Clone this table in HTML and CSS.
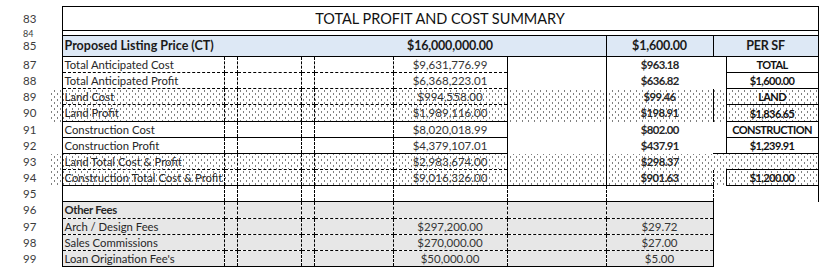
FILE: index.html
```html
<!DOCTYPE html>
<html>
<head>
<meta charset="utf-8">
<title>Total Profit and Cost Summary</title>
<link rel="stylesheet" href="styles.css">
</head>
<body>
<table class="sheet">
<colgroup>
<col class="c-gut"><col class="c-mg"><col class="c-a"><col class="c-b"><col class="c-c"><col class="c-d"><col class="c-e"><col class="c-f"><col class="c-g"><col class="c-h"><col class="c-i"><col class="c-j"><col class="c-k">
</colgroup>
<tbody>
<tr class="r-title"><td class="gut">83</td><td></td><td colspan="10" class="title">TOTAL PROFIT AND COST SUMMARY</td><td></td></tr>
<tr class="r-gap"><td class="gut gut-small">84</td><td></td><td colspan="10" class="gapbox"></td><td></td></tr>
<tr class="r-head"><td class="gut">85</td><td></td><td colspan="5" class="hd hd-lbl">Proposed Listing Price (CT)</td><td class="hd hd-val">$16,000,000.00</td><td class="hd"></td><td class="hd hd-val hd-box">$1,600.00</td><td colspan="2" class="hd hd-val hd-box">PER SF</td><td></td></tr>

<tr class="r"><td class="gut">87</td><td></td><td class="lbl">Total Anticipated Cost</td><td class="sp"></td><td class="sp"></td><td class="sp"></td><td class="sp"></td><td class="val">$9,631,776.99</td><td class="g"></td><td class="ps">$963.18</td><td class="i"></td><td class="j">TOTAL</td><td></td></tr>
<tr class="r"><td class="gut">88</td><td></td><td class="lbl">Total Anticipated Profit</td><td class="sp"></td><td class="sp"></td><td class="sp"></td><td class="sp"></td><td class="val">$6,368,223.01</td><td class="g"></td><td class="ps">$636.82</td><td class="i"></td><td class="j">$1,600.00</td><td></td></tr>
<tr class="r dots"><td class="gut">89</td><td class="mg"></td><td class="lbl">Land Cost</td><td class="sp"></td><td class="sp"></td><td class="sp"></td><td class="sp"></td><td class="val">$994,558.00</td><td class="g"></td><td class="ps">$99.46</td><td class="i i-edge"></td><td class="j">LAND</td><td></td></tr>
<tr class="r r17 dots"><td class="gut">90</td><td class="mg"></td><td class="lbl">Land Profit</td><td class="sp"></td><td class="sp"></td><td class="sp"></td><td class="sp"></td><td class="val">$1,989,116.00</td><td class="g"></td><td class="ps">$198.91</td><td class="i i-edge"></td><td class="j">$1,836.65</td><td></td></tr>
<tr class="r solid-top"><td class="gut">91</td><td></td><td class="lbl">Construction Cost</td><td class="sp"></td><td class="sp"></td><td class="sp"></td><td class="sp"></td><td class="val">$8,020,018.99</td><td class="g"></td><td class="ps">$802.00</td><td class="i"></td><td class="j">CONSTRUCTION</td><td></td></tr>
<tr class="r solid-top"><td class="gut">92</td><td></td><td class="lbl">Construction Profit</td><td class="sp"></td><td class="sp"></td><td class="sp"></td><td class="sp"></td><td class="val">$4,379,107.01</td><td class="g"></td><td class="ps">$437.91</td><td class="i"></td><td class="j">$1,239.91</td><td></td></tr>
<tr class="r dots solid-top"><td class="gut">93</td><td class="mg"></td><td class="lbl">Land Total Cost &amp; Profit</td><td class="sp"></td><td class="sp"></td><td class="sp"></td><td class="sp"></td><td class="val">$2,983,674.00</td><td class="g"></td><td class="ps">$298.37</td><td class="i i-top"></td><td class="j j-open">&nbsp;</td><td></td></tr>
<tr class="r dots"><td class="gut">94</td><td class="mg"></td><td class="lbl">Construction Total Cost &amp; Profit</td><td class="sp"></td><td class="sp"></td><td class="sp"></td><td class="sp"></td><td class="val">$9,016,326.00</td><td class="g"></td><td class="ps">$901.63</td><td class="i i-dash"></td><td class="j">$1,200.00</td><td></td></tr>

<tr class="r blank"><td class="gut">95</td><td></td><td class="lbl"></td><td class="sp"></td><td class="sp"></td><td class="sp"></td><td class="sp"></td><td class="val"></td><td class="sp"></td><td class="sp"></td><td class="i"></td><td class="j j-tail"></td><td></td></tr>
<tr class="r r17 fee fee-first"><td class="gut">96</td><td></td><td class="lbl lbl-bold">Other Fees</td><td class="sp"></td><td class="sp"></td><td class="sp"></td><td class="sp"></td><td class="sp"></td><td class="sp"></td><td class="sp fee-end"></td><td></td><td></td><td></td></tr>
<tr class="r fee"><td class="gut">97</td><td></td><td class="lbl">Arch / Design Fees</td><td class="sp"></td><td class="sp"></td><td class="sp"></td><td class="sp"></td><td class="sp num">$297,200.00</td><td class="sp"></td><td class="sp num fee-end">$29.72</td><td></td><td></td><td></td></tr>
<tr class="r fee"><td class="gut">98</td><td></td><td class="lbl">Sales Commissions</td><td class="sp"></td><td class="sp"></td><td class="sp"></td><td class="sp"></td><td class="sp num">$270,000.00</td><td class="sp"></td><td class="sp num fee-end">$27.00</td><td></td><td></td><td></td></tr>
<tr class="r fee fee-last"><td class="gut">99</td><td></td><td class="lbl">Loan Origination Fee's</td><td class="sp"></td><td class="sp"></td><td class="sp"></td><td class="sp"></td><td class="sp num">$50,000.00</td><td class="sp"></td><td class="sp num fee-end">$5.00</td><td></td><td></td><td></td></tr>
</tbody>
</table>
</body>
</html>
```

FILE: styles.css
```css
html, body {
  margin: 0;
  padding: 0;
  background: #fff;
}

.sheet {
  margin-top: 6px;
  width: 831px;
  table-layout: fixed;
  border-collapse: collapse;
  font-family: "Lato", "Liberation Sans", sans-serif;
  font-size: 11.3px;
  color: #262626;
}

.c-gut { width: 50px; }
.c-mg { width: 12px; }
.c-a { width: 162px; }
.c-b { width: 13px; }
.c-c { width: 64px; }
.c-d { width: 13px; }
.c-e { width: 79px; }
.c-f { width: 114px; }
.c-g { width: 99px; }
.c-h { width: 107px; }
.c-i { width: 13px; }
.c-j { width: 92px; }
.c-k { width: 13px; }

.sheet td {
  padding: 0;
  line-height: 1;
  white-space: nowrap;
  overflow: hidden;
  vertical-align: middle;
}

.gut {
  padding-left: 23px !important;
  color: #3c3c3c;
  font-size: 11.5px;
}

.sheet td.gut-small {
  overflow: visible;
  font-size: 9px;
  line-height: 5px;
  vertical-align: bottom;
}

.r-title { height: 24px; }
.r-gap { height: 5px; }
.r-head { height: 21px; }
.r { height: 16px; }
.r17 { height: 17px; }

.title {
  border: 1px solid #000;
  text-align: center;
  font-size: 14.5px;
  color: #111;
  padding-top: 1px !important;
}

.gapbox {
  border: 1px solid #000;
}

.hd {
  background: #dde8f5;
  border-top: 1px solid #000;
  border-bottom: 1px solid #000;
  font-weight: 700;
  font-size: 12.5px;
  color: #1a1a1a;
}

.hd-lbl {
  border-left: 1px solid #000;
  padding-left: 2px !important;
}

.hd-val {
  text-align: center;
  letter-spacing: -0.2px;
}

.hd-box {
  border-left: 1px solid #000;
  border-right: 1px solid #000;
}

.lbl {
  border-left: 1px solid #000;
  border-top: 1px dashed #000;
  border-bottom: 1px dashed #000;
  border-right: 1px dashed #000;
  padding-left: 2px !important;
}

.lbl-bold {
  font-weight: 700;
  letter-spacing: -0.3px;
}

.sp {
  border: 1px dashed #000;
}

.val {
  border-top: 1px dashed #000;
  border-bottom: 1px dashed #000;
  border-left: 1px dashed #000;
  border-right: 1px solid #000;
  text-align: center;
  color: #333;
  font-size: 11.5px;
}

.num {
  text-align: center;
  color: #333;
  font-size: 11.5px;
}

.ps {
  border-left: 1px solid #000;
  text-align: center;
  font-weight: 700;
  letter-spacing: -0.6px;
  font-size: 11.3px;
}

.i-edge {
  border-left: 1px solid #000;
}

.i-top {
  border-top: 1px solid #000;
}

.i-dash {
  border-left: 1px dashed #000;
  border-right: 1px dashed #000;
}

.j {
  border: 1px solid #000;
  text-align: center;
  font-weight: 700;
  letter-spacing: -0.6px;
  font-size: 11px;
  color: #111;
}

.j-open {
  border-left: none;
  border-bottom: none;
}

.j-tail {
  border-left: none;
  border-bottom: none;
  border-top: 1px solid #000;
}

.solid-top .lbl,
.solid-top .sp,
.solid-top .val {
  border-top-style: solid;
}

.blank .lbl,
.blank .sp,
.blank .val {
  border-top: 1px solid #000;
  border-bottom: 1px solid #000;
}

.blank .val {
  border-right: 1px dashed #000;
}

.fee .lbl,
.fee .sp {
  background: #e7e7e7;
}

.fee-first .lbl,
.fee-first .sp {
  border-top: 1px solid #000;
}

.fee-last .lbl,
.fee-last .sp {
  border-bottom: 1px solid #000;
}

.fee .fee-end {
  border-right: 1px solid #000;
}

.dots .mg,
.dots .lbl,
.dots .sp,
.dots .val,
.dots .g,
.dots .ps,
.dots .i,
.dots .j {
  background-color: #fff;
  background-image:
    conic-gradient(from 270deg at 1px 1px, #000 90deg, transparent 0),
    conic-gradient(from 270deg at 1px 1px, #000 90deg, transparent 0);
  background-size: 6px 6px, 6px 6px;
  background-position: 0 0, 3px 3px;
  background-attachment: fixed, fixed;
}
```
